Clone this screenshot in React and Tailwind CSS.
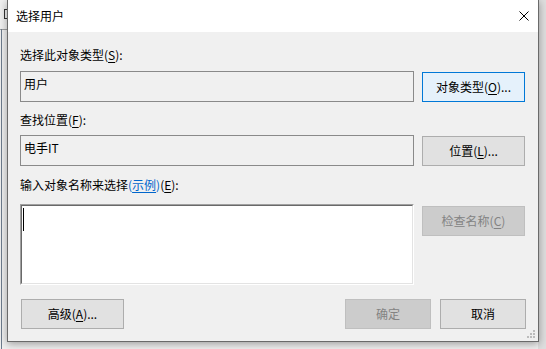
export default function App() {
  const btn =
    "h-[30px] flex items-center justify-center border text-[12px] leading-none";
  return (
    <div className="relative w-[546px] h-[349px] overflow-hidden bg-[#f0f0f0] font-['Noto_Sans_CJK_SC','Microsoft_YaHei',sans-serif] text-[12px] text-black">
      {/* background window behind */}
      <div className="absolute left-0 top-[29px] w-full h-px bg-[#a0a0a0]" />
      <div className="absolute left-[1px] top-[29px] bottom-0 w-px bg-[#6d7b8d]" />
      <div className="absolute left-[4px] top-[9px] w-[8px] h-[10px] border border-[#333]" />
      <div className="absolute right-0 top-0 w-[8px] h-full bg-[#dedede]" />

      {/* dialog */}
      <div className="absolute left-[7px] top-0 w-[532px] h-[342px] flex flex-col border-x border-b border-[#6a6a6a] shadow-[0_2px_8px_rgba(0,0,0,0.35)]">
        <div className="h-[32px] bg-white flex items-center justify-between pl-[8px] pr-[9px]">
          <span className="text-[12px] leading-none">选择用户</span>
          <svg width="10" height="10" viewBox="0 0 10 10">
            <path d="M0.5 0.5 L9.5 9.5 M9.5 0.5 L0.5 9.5" stroke="#000" strokeWidth="1" />
          </svg>
        </div>
        <div className="relative flex-1 bg-[#f0f0f0] px-[12px] pt-[13px] pb-[12px] flex flex-col">
          <div className="h-[20px] flex items-center mb-[6px]">
            选择此对象类型(<u className="underline-offset-2">S</u>):
          </div>
          <div className="flex gap-[8px] h-[31px]">
            <div className="w-[394px] h-[31px] border border-[#8a8a8a] bg-[#f0f0f0] px-[3px] pt-[4px] leading-[16px]">
              用户
            </div>
            <div className={`${btn} mt-[1px] w-[103px] border-[#0078d7] bg-[#e5f1fb]`}>
              对象类型(<u className="underline-offset-2">O</u>)...
            </div>
          </div>

          <div className="h-[20px] flex items-center mt-[8px] mb-[5px]">
            查找位置(<u className="underline-offset-2">F</u>):
          </div>
          <div className="flex gap-[8px] h-[31px]">
            <div className="w-[394px] h-[31px] border border-[#8a8a8a] bg-[#f0f0f0] px-[3px] pt-[4px] leading-[16px]">
              电手IT
            </div>
            <div className={`${btn} mt-[1px] w-[103px] border-[#adadad] bg-[#e1e1e1]`}>
              位置(<u className="underline-offset-2">L</u>)...
            </div>
          </div>

          <div className="h-[20px] flex items-center mt-[9px] mb-[9px]">
            输入对象名称来选择<span className="text-[#0066cc]">(<u className="underline-offset-2">示例</u>)</span>(<u className="underline-offset-2">E</u>):
          </div>
          <div className="flex gap-[8px] h-[81px]">
            <div className="w-[394px] h-[81px] border border-t-[#a0a0a0] border-l-[#a0a0a0] border-r-white border-b-white">
              <div className="w-full h-full bg-white border border-t-[#696969] border-l-[#696969] border-r-[#e3e3e3] border-b-[#e3e3e3] pl-[1px] pt-[2px]">
                <div className="w-px h-[23px] bg-black" />
              </div>
            </div>
            <div className={`${btn} mt-[2px] w-[103px] border-[#bfbfbf] bg-[#cccccc] text-[#838383]`}>
              检查名称(<u className="underline-offset-2">C</u>)
            </div>
          </div>

          <div className="flex mt-[14px] h-[30px]">
            <div className={`${btn} ml-[1px] w-[103px] border-[#adadad] bg-[#e1e1e1]`}>
              高级(<u className="underline-offset-2">A</u>)...
            </div>
            <div className="flex-1" />
            <div className={`${btn} w-[86px] border-[#bfbfbf] bg-[#cccccc] text-[#838383]`}>
              确定
            </div>
            <div className={`${btn} ml-[9px] w-[86px] border-[#adadad] bg-[#e1e1e1]`}>
              取消
            </div>
          </div>

          {/* size grip */}
          <svg className="absolute right-[3px] bottom-[3px]" width="8" height="8" viewBox="0 0 8 8">
            <rect x="6" y="0" width="2" height="2" fill="#bcbcbc" />
            <rect x="3" y="3" width="2" height="2" fill="#bcbcbc" />
            <rect x="6" y="3" width="2" height="2" fill="#bcbcbc" />
            <rect x="0" y="6" width="2" height="2" fill="#bcbcbc" />
            <rect x="3" y="6" width="2" height="2" fill="#bcbcbc" />
            <rect x="6" y="6" width="2" height="2" fill="#bcbcbc" />
          </svg>
        </div>
      </div>
    </div>
  );
}
